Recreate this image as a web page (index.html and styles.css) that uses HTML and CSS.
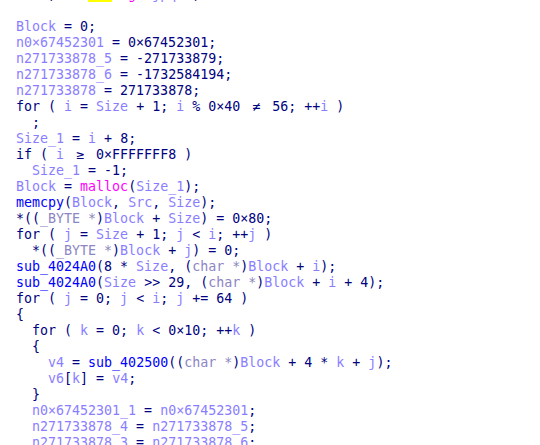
FILE: index.html
```html
<!DOCTYPE html>
<html>
<head>
<meta charset="utf-8">
<link rel="stylesheet" href="styles.css">
</head>
<body>
<div class="code">
<div class="ln">      ,    <span class="hl">   </span>  <span class="m">g</span>  <span class="v">jpq</span>  ,</div>
<div class="ln"> </div>
<div class="ln">  <span class="v">Block</span> = 0;</div>
<div class="ln">  <span class="v">n0×67452301</span> = 0×67452301;</div>
<div class="ln">  <span class="v">n271733878_5</span> = -271733879;</div>
<div class="ln">  <span class="v">n271733878_6</span> = -1732584194;</div>
<div class="ln">  <span class="v">n271733878</span> = 271733878;</div>
<div class="ln">  for ( <span class="v">i</span> = <span class="v">Size</span> + 1; <span class="v">i</span> % 0×40 <span class="lig">≠</span> 56; ++<span class="v">i</span> )</div>
<div class="ln">    ;</div>
<div class="ln">  <span class="v">Size_1</span> = <span class="v">i</span> + 8;</div>
<div class="ln">  if ( <span class="v">i</span> <span class="lig">≥</span> 0×FFFFFFF8 )</div>
<div class="ln">    <span class="v">Size_1</span> = -1;</div>
<div class="ln">  <span class="v">Block</span> = <span class="m">malloc</span>(<span class="v">Size_1</span>);</div>
<div class="ln">  <span class="f">memcpy</span>(<span class="v">Block</span>, <span class="v">Src</span>, <span class="v">Size</span>);</div>
<div class="ln">  *((<span class="t">_BYTE *</span>)<span class="v">Block</span> + <span class="v">Size</span>) = 0×80;</div>
<div class="ln">  for ( <span class="v">j</span> = <span class="v">Size</span> + 1; <span class="v">j</span> &lt; <span class="v">i</span>; ++<span class="v">j</span> )</div>
<div class="ln">    *((<span class="t">_BYTE *</span>)<span class="v">Block</span> + <span class="v">j</span>) = 0;</div>
<div class="ln">  <span class="f">sub_4024A0</span>(8 * <span class="v">Size</span>, (<span class="t">char *</span>)<span class="v">Block</span> + <span class="v">i</span>);</div>
<div class="ln">  <span class="f">sub_4024A0</span>(<span class="v">Size</span> &gt;&gt; 29, (<span class="t">char *</span>)<span class="v">Block</span> + <span class="v">i</span> + 4);</div>
<div class="ln">  for ( <span class="v">j</span> = 0; <span class="v">j</span> &lt; <span class="v">i</span>; <span class="v">j</span> += 64 )</div>
<div class="ln">  {</div>
<div class="ln">    for ( <span class="v">k</span> = 0; <span class="v">k</span> &lt; 0×10; ++<span class="v">k</span> )</div>
<div class="ln">    {</div>
<div class="ln">      <span class="v">v4</span> = <span class="f">sub_402500</span>((<span class="t">char *</span>)<span class="v">Block</span> + 4 * <span class="v">k</span> + <span class="v">j</span>);</div>
<div class="ln">      <span class="v">v6</span>[<span class="v">k</span>] = <span class="v">v4</span>;</div>
<div class="ln">    }</div>
<div class="ln">    <span class="v">n0×67452301_1</span> = <span class="v">n0×67452301</span>;</div>
<div class="ln">    <span class="v">n271733878_4</span> = <span class="v">n271733878_5</span>;</div>
<div class="ln">    <span class="v">n271733878_3</span> = <span class="v">n271733878_6</span>;</div>
</div>
</body>
</html>
```
FILE: styles.css
```css
html, body {
  margin: 0;
  padding: 0;
  background: #ffffff;
  overflow: hidden;
}
.code {
  margin-top: -13.5px;
  font-family: "DejaVu Sans Mono", monospace;
  font-size: 13.3px;
  color: #000080;
}
.ln {
  white-space: pre;
  height: 16px;
  line-height: 16px;
}
.v { color: #8a7eff; }
.t { color: #8c86c4; }
.f { color: #0000ff; }
.m { color: #ff00ff; }
.hl { background: #ffff00; }
.lig {
  display: inline-block;
  width: 16px;
  text-align: center;
}
```
